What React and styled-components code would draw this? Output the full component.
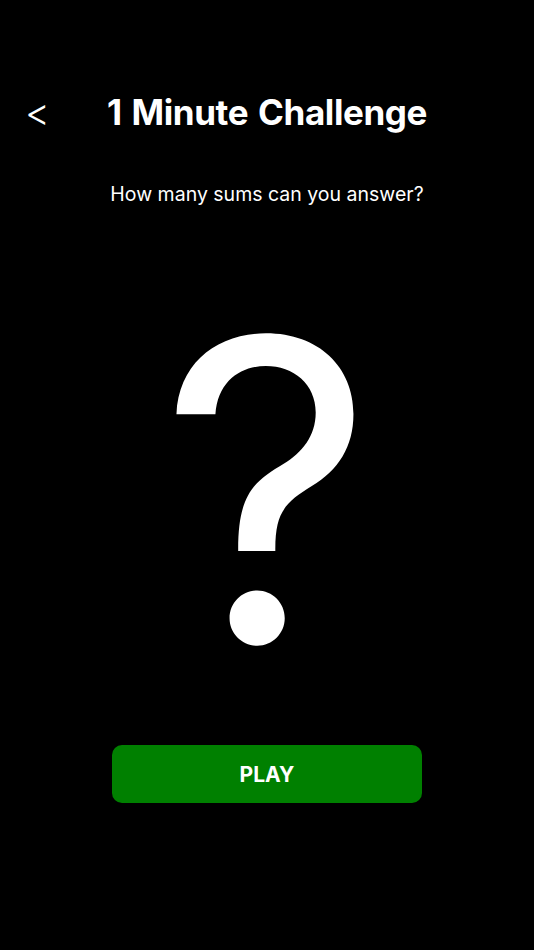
import React from "react";
import styled, { createGlobalStyle } from "styled-components";

const Global = createGlobalStyle`
  html, body { margin: 0; padding: 0; background: #000; }
  body { font-family: Inter, "Noto Sans", sans-serif; color: #fff; }
`;

const Screen = styled.div`
  width: 534px;
  height: 950px;
  background: #000;
  display: flex;
  flex-direction: column;
  align-items: center;
  overflow: hidden;
`;

const Header = styled.div`
  width: 100%;
  height: 48px;
  margin-top: 88px;
  display: flex;
  align-items: center;
  justify-content: center;
  position: relative;
`;

const Back = styled.button`
  position: absolute;
  left: 25px;
  top: 50%;
  transform: translateY(-50%);
  background: none;
  border: none;
  color: #fff;
  font-family: Inter, sans-serif;
  font-size: 38px;
  font-weight: 300;
  padding: 0;
  cursor: pointer;
`;

const Title = styled.h1`
  margin: 0;
  font-size: 35px;
  font-weight: 700;
  letter-spacing: -0.4px;
  word-spacing: 2px;
`;

const Subtitle = styled.p`
  margin: 46px 0 0;
  font-size: 19.5px;
  font-weight: 400;
`;

const Mark = styled.div`
  margin-top: 74px;
  font-size: 420px;
  font-weight: 400;
  line-height: 420px;
  height: 420px;
`;

const PlayButton = styled.button`
  margin-top: 45px;
  width: 310px;
  height: 58px;
  background: #008000;
  border: none;
  border-radius: 10px;
  color: #fff;
  font-family: Inter, sans-serif;
  font-size: 21px;
  font-weight: 700;
  cursor: pointer;
`;

export default function App() {
  return (
    <>
      <Global />
      <Screen>
        <Header>
          <Back>&lt;</Back>
          <Title>1 Minute Challenge</Title>
        </Header>
        <Subtitle>How many sums can you answer?</Subtitle>
        <Mark>?</Mark>
        <PlayButton>PLAY</PlayButton>
      </Screen>
    </>
  );
}
